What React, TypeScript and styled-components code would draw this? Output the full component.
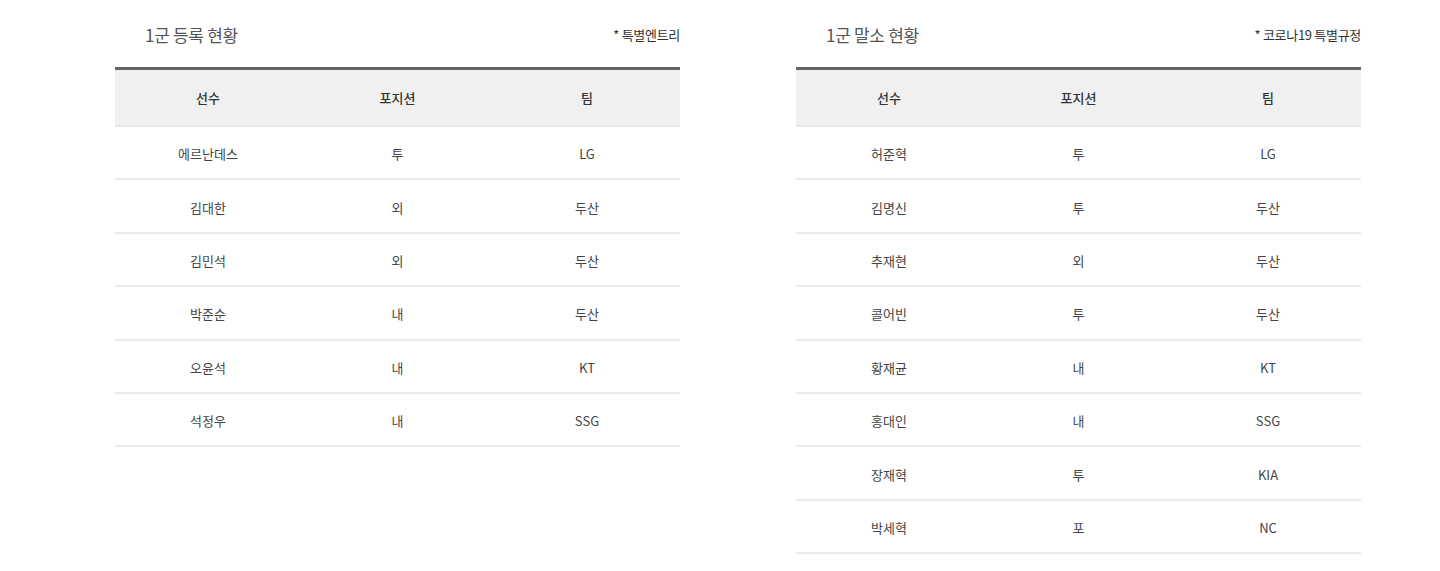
import React from "react";
import styled, { createGlobalStyle } from "styled-components";

const Global = createGlobalStyle`
  html, body { margin: 0; padding: 0; background: #fff; }
  body { font-family: "Noto Sans CJK KR", "Noto Sans", sans-serif; color: #333; }
`;

const Page = styled.div`
  display: flex;
  gap: 116px;
  padding-left: 115px;
`;

const Section = styled.section`
  width: 565px;
  display: flex;
  flex-direction: column;
`;

const Head = styled.div`
  height: 67px;
  box-sizing: border-box;
  padding: 2px 0 0 30px;
  display: flex;
  align-items: center;
  justify-content: space-between;
`;

const Title = styled.h3`
  margin: 0;
  font-size: 17px;
  font-weight: 400;
  color: #555;
  letter-spacing: -0.3px;
`;

const Note = styled.span`
  font-size: 13px;
  color: #333;
  letter-spacing: -0.3px;
`;

const Table = styled.div`
  border-top: 3px solid #666;
  display: flex;
  flex-direction: column;
`;

const Row = styled.div<{ $head?: boolean }>`
  display: grid;
  grid-template-columns: 186px 192px 1fr;
  height: ${(p) => (p.$head ? "57px" : "53.4px")};
  flex-shrink: 0;
  box-sizing: border-box;
  border-bottom: 2px solid ${(p) => (p.$head ? "#e6e6e6" : "#ebebeb")};
  background: ${(p) => (p.$head ? "#f0f0f0" : "#fff")};
`;

const Cell = styled.div<{ $head?: boolean; $first?: boolean }>`
  display: flex;
  align-items: center;
  justify-content: center;
  font-size: 13px;
  font-weight: ${(p) => (p.$head ? 500 : 400)};
  color: ${(p) => (p.$head ? "#333" : "#444")};
  border-left: ${(p) => (p.$first ? "none" : `1px solid ${p.$head ? "#f4f4f4" : "#fff"}`)};
  padding-top: ${(p) => (p.$head ? "0" : "2px")};
`;

type Item = [string, string, string];

const registered: Item[] = [
  ["에르난데스", "투", "LG"],
  ["김대한", "외", "두산"],
  ["김민석", "외", "두산"],
  ["박준순", "내", "두산"],
  ["오윤석", "내", "KT"],
  ["석정우", "내", "SSG"],
];

const released: Item[] = [
  ["허준혁", "투", "LG"],
  ["김명신", "투", "두산"],
  ["추재현", "외", "두산"],
  ["콜어빈", "투", "두산"],
  ["황재균", "내", "KT"],
  ["홍대인", "내", "SSG"],
  ["장재혁", "투", "KIA"],
  ["박세혁", "포", "NC"],
];

function RosterTable({ title, note, items }: { title: string; note: string; items: Item[] }) {
  return (
    <Section>
      <Head>
        <Title>{title}</Title>
        <Note>{note}</Note>
      </Head>
      <Table>
        <Row $head>
          <Cell $head $first>선수</Cell>
          <Cell $head>포지션</Cell>
          <Cell $head>팀</Cell>
        </Row>
        {items.map((it, i) => (
          <Row key={i}>
            <Cell $first>{it[0]}</Cell>
            <Cell>{it[1]}</Cell>
            <Cell>{it[2]}</Cell>
          </Row>
        ))}
      </Table>
    </Section>
  );
}

export default function App() {
  return (
    <>
      <Global />
      <Page>
        <RosterTable title="1군 등록 현황" note="* 특별엔트리" items={registered} />
        <RosterTable title="1군 말소 현황" note="* 코로나19 특별규정" items={released} />
      </Page>
    </>
  );
}
